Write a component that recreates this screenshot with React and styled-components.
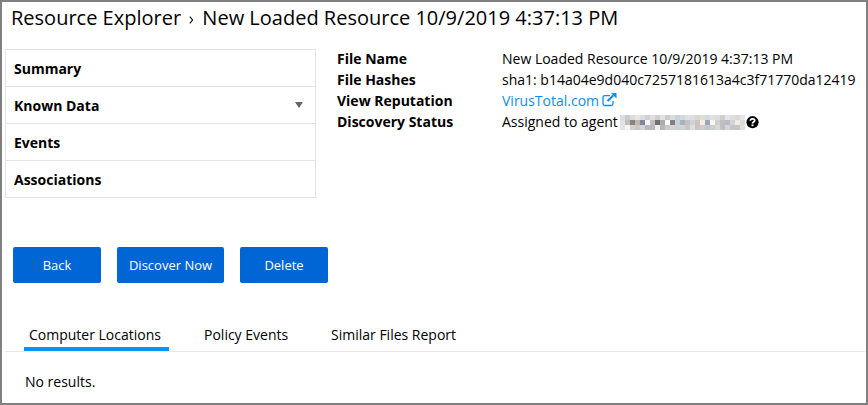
import React from 'react';
import styled, { createGlobalStyle } from 'styled-components';

const GlobalStyle = createGlobalStyle`
  * { box-sizing: border-box; }
  body { margin: 0; background: #fff; color: #000; font: 14px/21px "Open Sans", "Noto Sans", sans-serif; }
`;
const Frame = styled.main`
  width: 868px;
  height: 405px;
  border: 2px solid #808080;
  overflow: hidden;
`;
const Title = styled.h1`
  margin: 0;
  padding: 1px 0 0 9px;
  height: 47px;
  font-size: 20px;
  font-weight: 400;
  line-height: 30px;
  white-space: pre;
  display: flex;
`;
const Chevron = styled.svg`
  width: 5px;
  height: 8px;
  margin: 13px 8.3px 0 8px;
`;
const Overview = styled.section`
  display: flex;
  height: 198px;
`;
const Menu = styled.nav`
  width: 311px;
  height: 149px;
  margin-left: 3px;
  border: 1px solid #e3e3e3;
`;
const MenuItem = styled.div`
  height: 37px;
  padding: 1px 12px 0 8px;
  display: flex;
  align-items: center;
  justify-content: space-between;
  font-weight: 700;
  border-bottom: 1px solid #e3e3e3;
  &:last-child { border-bottom-color: transparent; }
`;
const Caret = styled.svg`
  width: 8px;
  height: 6px;
  margin-top: -1px;
`;
const Details = styled.dl`
  margin: -1px 0 0 21px;
  display: grid;
  grid-template-columns: 165px 360px;
  grid-auto-rows: 21px;
  white-space: nowrap;
`;
const Label = styled.dt`
  font-weight: 700;
`;
const Value = styled.dd`
  margin: 0;
  display: flex;
`;
const Link = styled.a`
  color: #0d8fec;
  display: flex;
  text-decoration: none;
`;
const LinkIcon = styled.svg`
  width: 15px;
  height: 14px;
  margin: 3px 0 0 3px;
`;
const Redacted = styled.svg`
  width: 125px;
  height: 15px;
  margin: 4px 0 0 2px;
`;
const HelpIcon = styled.svg`
  width: 13px;
  height: 13px;
  margin: 5px 0 0 1px;
`;
const Actions = styled.div`
  display: flex;
  gap: 16px;
  padding-left: 11px;
  height: 71px;
`;
const Button = styled.button`
  width: ${(p) => p.$width}px;
  height: 36px;
  padding: 0;
  border: 0;
  border-radius: 2px;
  background: #0066d6;
  color: #fff;
  font: inherit;
  font-size: 13px;
`;
const Tabs = styled.div`
  display: flex;
  gap: 30px;
  height: 34px;
  margin-left: 3px;
  padding-left: 19px;
  border-bottom: 1px solid #e6e9ee;
`;
const Tab = styled.div`
  height: 33px;
  padding: 6px 0 0 5px;
  width: ${(p) => p.$width}px;
  white-space: nowrap;
  border-bottom: 4px solid ${(p) => (p.$active ? '#0a94f0' : 'transparent')};
`;
const Empty = styled.p`
  margin: 19px 0 0 23px;
`;

const mosaic = [
  ['#dbdde2', '#c6ccd4', '#dcdcdf', '#ece5df', '#dcdcdc', '#cdd1d9', '#e2dfdc', '#cfcfd3', '#e3e1df', '#cccccf', '#dddbd9', '#cad2d7', '#d3d9dc', '#e0e0e0', '#dedede', '#d8d8d8', '#e2ddda', '#d3dae0', '#e0e2e0', '#dedede', '#cfcfcf', '#e5e5e5', '#dcdde2', '#d9d9dc', '#e6e6ea'],
  ['#e2e2e4', '#c4bdb9', '#888280', '#b9b8b9', '#7f86a0', '#f3f5f7', '#c3bebd', '#756f6a', '#a5adb5', '#fffdf0', '#817f89', '#cbd2d5', '#a8b2b8', '#bfc3c3', '#d3d3d5', '#ccc4c0', '#ffe9d7', '#98a9bf', '#f6f8ed', '#ced0cc', '#bebdca', '#b9b9c1', '#d5d2d0', '#f1ebdf', '#d8dade'],
  ['#e1e5ea', '#f5f5f5', '#d4d0cc', '#c9c8c6', '#d3d3d7', '#b9b9b5', '#b5bac0', '#e9f2f7', '#b9b6b4', '#c8cccc', '#d8d3ce', '#c9d1d2', '#d0d5d7', '#c9c7c5', '#dedede', '#c8c5c3', '#cfcccb', '#c0c8d1', '#cfcfca', '#d7dada', '#c2beba', '#d4d4dc', '#c3c5cd', '#c9c4c0', '#dedfe2'],
];

export default function App() {
  return (
    <>
      <GlobalStyle />
      <Frame>
        <Title>
          Resource Explorer
          <Chevron viewBox="0 0 5 8" fill="none" stroke="#000" strokeWidth="1.1"><path d="M.8 .7 3.6 4 .8 7.3" /></Chevron>
          New Loaded Resource 10/9/2019 4:37:13 PM
        </Title>
        <Overview>
          <Menu>
            <MenuItem>Summary</MenuItem>
            <MenuItem>
              Known Data
              <Caret viewBox="0 0 8 6"><path d="M0 0h8L4 6z" fill="#666" /></Caret>
            </MenuItem>
            <MenuItem>Events</MenuItem>
            <MenuItem>Associations</MenuItem>
          </Menu>
          <Details>
            <Label>File Name</Label>
            <Value>New Loaded Resource 10/9/2019 4:37:13 PM</Value>
            <Label>File Hashes</Label>
            <Value>sha1: b14a04e9d040c7257181613a4c3f71770da12419</Value>
            <Label>View Reputation</Label>
            <Value>
              <Link>
                VirusTotal.com
                <LinkIcon viewBox="0 0 15 14" fill="none" stroke="currentColor">
                  <path d="M8 2.7H2.7Q1 2.7 1 4.4v6.4q0 1.7 1.7 1.7h6.6q1.7 0 1.7-1.7V8" strokeWidth="1.3" />
                  <path d="m5.5 8 6-5.8" strokeWidth="2" />
                  <path d="M9 0h5.5v5.5z" fill="currentColor" stroke="none" />
                </LinkIcon>
              </Link>
            </Value>
            <Label>Discovery Status</Label>
            <Value>
              Assigned to agent
              <Redacted viewBox="0 0 125 15" shapeRendering="crispEdges">
                {mosaic.map((row, y) => row.map((fill, x) => (
                  <rect key={`${x}-${y}`} x={x * 5} y={y * 5} width="5" height="5" fill={fill} />
                )))}
              </Redacted>
              <HelpIcon viewBox="0 0 13 13" fill="none">
                <circle cx="6.5" cy="6.2" r="6.1" fill="#000" />
                <path d="M4.3 4.7C4.4 2.1 8.8 2.2 8.7 4.6 8.6 6 6.5 6 6.5 7.5" stroke="#fff" strokeWidth="1.8" />
                <path d="M5.5 8.4h2v1.8h-2z" fill="#fff" />
              </HelpIcon>
            </Value>
          </Details>
        </Overview>
        <Actions>
          <Button $width={88}>Back</Button>
          <Button $width={107}>Discover Now</Button>
          <Button $width={88}>Delete</Button>
        </Actions>
        <Tabs>
          <Tab $active $width={145}>Computer Locations</Tab>
          <Tab $width={97}>Policy Events</Tab>
          <Tab $width={140}>Similar Files Report</Tab>
        </Tabs>
        <Empty>No results.</Empty>
      </Frame>
    </>
  );
}
